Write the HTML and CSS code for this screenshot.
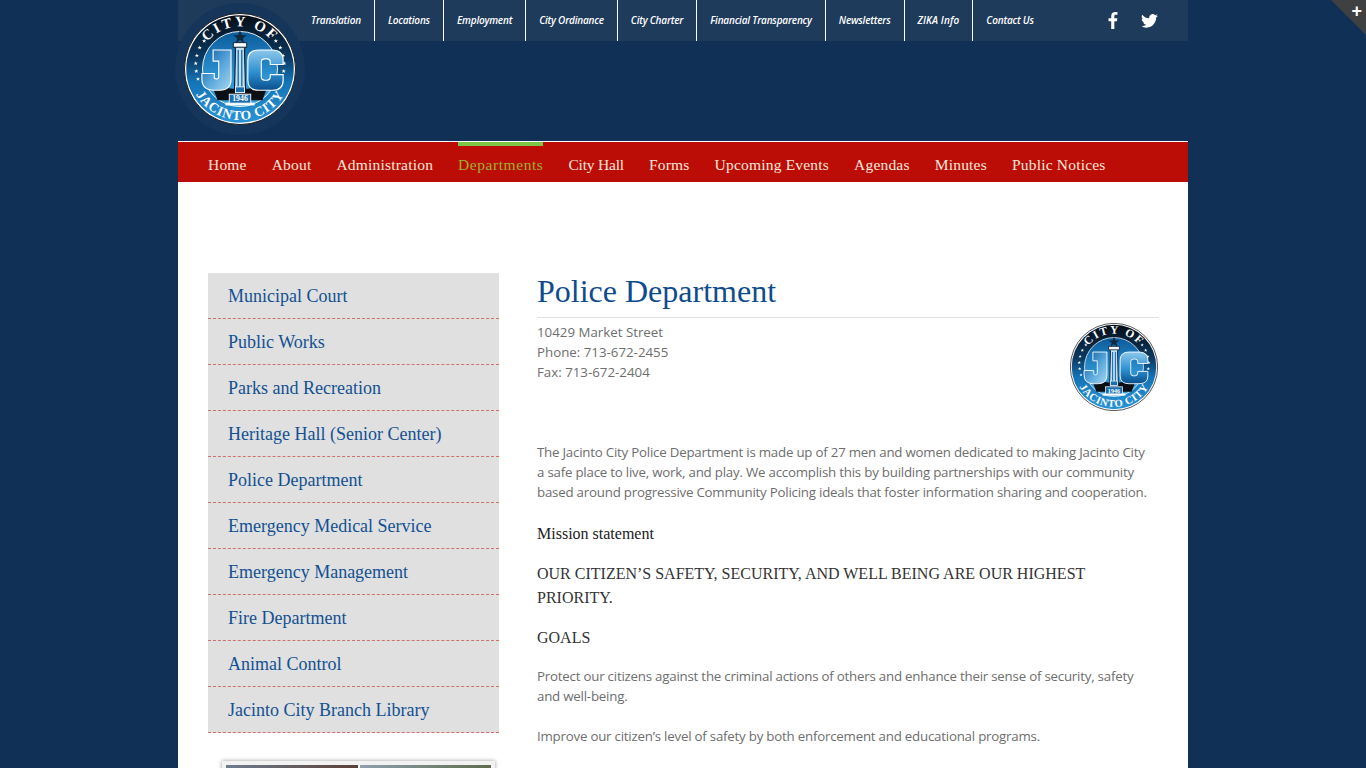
FILE: index.html
```html
<!DOCTYPE html>
<html lang="en">
<head>
<meta charset="utf-8">
<title>Police Department</title>
<link rel="stylesheet" href="styles.css">
</head>
<body>
<svg class="defs" width="0" height="0" aria-hidden="true">
  <defs>
    <linearGradient id="ringGrad" x1="0" y1="0" x2="0" y2="1">
      <stop offset="0" stop-color="#050d16"/>
      <stop offset=".4" stop-color="#0c3a63"/>
      <stop offset=".62" stop-color="#1374b6"/>
      <stop offset="1" stop-color="#2a94d6"/>
    </linearGradient>
    <linearGradient id="discGrad" x1="0" y1="0" x2="0" y2="1">
      <stop offset="0" stop-color="#0a5c9c"/>
      <stop offset=".6" stop-color="#2f93d2"/>
      <stop offset="1" stop-color="#3ba2dc"/>
    </linearGradient>
    <linearGradient id="letterJ" x1="0" y1="0" x2="1" y2="1">
      <stop offset="0" stop-color="#0a5596"/>
      <stop offset=".55" stop-color="#5aa8dc"/>
      <stop offset="1" stop-color="#a8d6f0"/>
    </linearGradient>
    <linearGradient id="letterC" x1="0" y1="0" x2="0" y2="1">
      <stop offset="0" stop-color="#8cc8ec"/>
      <stop offset=".55" stop-color="#2f8fd0"/>
      <stop offset="1" stop-color="#0a4f8c"/>
    </linearGradient>
    <path id="arcTop" d="M 12 50 A 38 38 0 0 1 88 50"/>
    <path id="arcBottom" d="M 4.500 50 A 45.500 45.500 0 0 0 95.500 50"/>
    <path id="star" d="M0-1.900.5-.6H1.900L.8.200 1.200 1.600 0 .7-1.200 1.600-.8.200-1.900-.6H-.5z" fill="#fff"/>
    <symbol id="seal" viewBox="0 0 100 100">
      <circle cx="50" cy="50" r="49.600" fill="#fff" stroke="#111" stroke-width=".8"/>
      <circle cx="50" cy="50" r="48" fill="url(#ringGrad)"/>
      <circle cx="50" cy="50" r="33.500" fill="url(#discGrad)" stroke="#fff" stroke-width=".8"/>
      <path d="M24 62q26 12 52 0l-6 16H30z" fill="#0a0f16"/>
      <text class="seal-top"><textPath href="#arcTop" startOffset="50%" text-anchor="middle">CITY OF</textPath></text>
      <text class="seal-bottom"><textPath href="#arcBottom" startOffset="50%" text-anchor="middle">JACINTO CITY</textPath></text>
      <use href="#star" x="11" y="52"/><use href="#star" x="10.500" y="45"/><use href="#star" x="11.500" y="38"/>
      <use href="#star" x="14" y="31"/><use href="#star" x="18" y="25"/><use href="#star" x="12.500" y="59"/>
      <use href="#star" x="89" y="52"/><use href="#star" x="89.500" y="45"/><use href="#star" x="88.500" y="38"/>
      <use href="#star" x="86" y="31"/><use href="#star" x="82" y="25"/><use href="#star" x="87.500" y="59"/>
      <path d="M26 33h16v26q0 10-10 10h-5q-11 0-11-10v-5h11v3q0 2 2 2t2-2V43h-5z" fill="url(#letterJ)" stroke="#fff" stroke-width="1"/>
      <path d="M88.500 46H77v-2q0-3-3-3h-2q-3 0-3 3v13q0 3 3 3h2q3 0 3-3v-2h11.500v5q0 9-10 9H67q-10 0-10-9V42q0-9 10-9h11.500q10 0 10 9z" fill="url(#letterC)" stroke="#fff" stroke-width="1"/>
      <path d="M45.500 30h9l-.5 3 1 39h-10l1-39z" fill="#bfe0f5" stroke="#0b1a2a" stroke-width="1"/>
      <rect x="44" y="26.500" width="12" height="4" fill="#fff" stroke="#0b1a2a" stroke-width=".8"/>
      <path d="M47.800 33h1.200v38h-1.200zM51 33h1.200v38H51z" fill="#1e6aa8"/>
      <rect x="46" y="66" width="8" height="5" fill="#1b6fae" stroke="#fff" stroke-width=".7"/>
      <path d="M50 15.500l1.700 4.300h4.300l-3.500 2.700 1.300 4.200-3.800-2.600-3.800 2.600 1.300-4.200-3.500-2.700h4.300z" fill="#12263c"/>
      <rect x="37" y="80" width="26" height="2.500" fill="#fff"/>
      <rect x="40.400" y="72.500" width="19.200" height="8" fill="#1b6fae" stroke="#fff" stroke-width=".8"/>
      <text class="seal-year" x="50" y="79" text-anchor="middle">1946</text>
    </symbol>
  </defs>
</svg>

<div class="corner" aria-hidden="true"><span class="corner-plus">+</span></div>

<div class="wrapper">
  <header class="header">
    <div class="seal-halo"><svg class="seal-large" role="img" aria-label="City of Jacinto City seal"><use href="#seal"/></svg></div>
    <div class="topbar">
      <nav class="topnav">
        <a class="tn">Translation</a>
        <a class="tn">Locations</a>
        <a class="tn">Employment</a>
        <a class="tn">City Ordinance</a>
        <a class="tn">City Charter</a>
        <a class="tn">Financial Transparency</a>
        <a class="tn">Newsletters</a>
        <a class="tn tn-zika">ZIKA Info</a>
        <a class="tn tn-last">Contact Us</a>
      </nav>
      <div class="social">
        <svg class="fb" viewBox="0 0 10 19" aria-label="Facebook"><path fill="#fff" d="M6.500 19V10.300h2.900l.4-3.400H6.500V4.700c0-1 .3-1.600 1.700-1.600H10V.1C9.700.1 8.600 0 7.400 0 4.800 0 3 1.600 3 4.400v2.500H0v3.400h3V19z"/></svg>
        <svg class="tw" viewBox="0 0 24 20" aria-label="Twitter"><path fill="#fff" d="M24 2.400a9.800 9.800 0 0 1-2.800.8A4.900 4.900 0 0 0 23.300.5a9.800 9.800 0 0 1-3.100 1.200 4.900 4.900 0 0 0-8.400 4.500A14 14 0 0 1 1.700.9a4.900 4.900 0 0 0 1.500 6.600 4.900 4.900 0 0 1-2.200-.6v.1a4.900 4.900 0 0 0 3.900 4.800 4.900 4.900 0 0 1-2.200.1 4.900 4.900 0 0 0 4.600 3.400A9.900 9.900 0 0 1 0 17.300 14 14 0 0 0 7.500 19.500c9.100 0 14-7.500 14-14v-.6A10 10 0 0 0 24 2.400z"/></svg>
      </div>
    </div>
  </header>

  <nav class="mainnav">
    <a class="mn">Home</a>
    <a class="mn">About</a>
    <a class="mn">Administration</a>
    <a class="mn mn-active">Departments</a>
    <a class="mn mn-hall">City Hall</a>
    <a class="mn">Forms</a>
    <a class="mn">Upcoming Events</a>
    <a class="mn">Agendas</a>
    <a class="mn">Minutes</a>
    <a class="mn">Public Notices</a>
  </nav>

  <div class="content">
    <aside class="sidebar">
      <ul class="sidemenu">
        <li><a>Municipal Court</a></li>
        <li><a>Public Works</a></li>
        <li><a>Parks and Recreation</a></li>
        <li><a>Heritage Hall (Senior Center)</a></li>
        <li><a>Police Department</a></li>
        <li><a>Emergency Medical Service</a></li>
        <li><a>Emergency Management</a></li>
        <li><a>Fire Department</a></li>
        <li><a>Animal Control</a></li>
        <li><a>Jacinto City Branch Library</a></li>
      </ul>
      <div class="photo">
        <div class="photo-a"></div>
        <div class="photo-b"></div>
      </div>
    </aside>
    <main class="main">
      <h1 class="title">Police Department</h1>
      <div class="contact">
        <p class="address">10429 Market Street<br>Phone: 713-672-2455<br>Fax: 713-672-2404</p>
        <svg class="seal-small" role="img" aria-label="City of Jacinto City seal"><use href="#seal"/></svg>
      </div>
      <p class="body-text">The Jacinto City Police Department is made up of 27 men and women dedicated to making Jacinto City a safe place to live, work, and play. We accomplish this by building partnerships with our community based around progressive Community Policing ideals that foster information sharing and cooperation.</p>
      <p class="serif-sm">Mission statement</p>
      <p class="serif-lg">OUR CITIZEN’S SAFETY, SECURITY, AND WELL BEING ARE OUR HIGHEST PRIORITY.</p>
      <p class="serif-goals">GOALS</p>
      <p class="body-text goal">Protect our citizens against the criminal actions of others and enhance their sense of security, safety and well-being.</p>
      <p class="body-text goal">Improve our citizen’s level of safety by both enforcement and educational programs.</p>
    </main>
  </div>
</div>
</body>
</html>
```
FILE: styles.css
```css
html, body { margin: 0; padding: 0; }
body {
  background: #103155;
  font-family: "Open Sans", "Noto Sans", sans-serif;
  height: 768px;
  overflow: hidden;
  position: relative;
}
.defs { position: absolute; }
a { color: inherit; text-decoration: none; }
p { margin: 0; }

.corner {
  position: absolute;
  top: 0;
  right: 0;
  width: 35px;
  height: 35px;
  background: #3f4042;
  clip-path: polygon(0 0, 100% 0, 100% 100%);
}
.corner-plus {
  position: absolute;
  right: 4px;
  top: 3px;
  color: #fff;
  font: 700 18px/17px "Liberation Sans", sans-serif;
}

.wrapper { width: 1010px; margin-left: 178px; }

.header { height: 141px; position: relative; }
.seal-halo {
  position: absolute;
  left: -3px;
  top: 3px;
  width: 130px;
  height: 132px;
  border-radius: 50%;
  background: #15365a;
  display: flex;
  align-items: center;
  justify-content: center;
}
.seal-large { width: 112px; height: 112px; }
.topbar {
  height: 41px;
  background: #1f3b5c;
  display: flex;
  justify-content: space-between;
  padding-left: 120px;
}
.topnav { display: flex; }
.tn {
  color: #fff;
  font: italic 600 10px/40px "Open Sans", sans-serif;
  letter-spacing: -.2px;
  height: 41px;
  padding: 0 13px;
  border-right: 1px solid #fff;
  white-space: nowrap;
}
.tn-zika { letter-spacing: .12px; }
.tn-last { border-right: 0; }
.social { display: flex; align-items: center; gap: 23px; padding-right: 30px; }
.fb { width: 10px; height: 17px; }
.tw { width: 17px; height: 14px; }

.mainnav {
  height: 40px;
  border-top: 1px solid #fff;
  background: #bb0d05;
  display: flex;
  padding-left: 30px;
  gap: 25px;
}
.mn {
  color: #f7e8dc;
  font: 15.500px/46px "Liberation Serif", serif;
  letter-spacing: .2px;
  position: relative;
  white-space: nowrap;
}
.mn-hall { letter-spacing: -.2px; }
.mn-active { color: #9ab22c; letter-spacing: .56px; }
.mn-active::before {
  content: "";
  position: absolute;
  left: 0;
  right: 0;
  top: 0;
  height: 4px;
  background: #7dc544;
}

.content {
  background: #fff;
  height: 586px;
  display: flex;
  padding: 91px 29px 0 30px;
  gap: 38px;
  box-sizing: border-box;
}
.sidebar { width: 291px; flex: none; }
.sidemenu { list-style: none; margin: 0; padding: 0; }
.sidemenu li {
  height: 46px;
  box-sizing: border-box;
  background: #e0e0e0;
  border-bottom: 1px dashed #d0706a;
  padding-left: 20px;
  color: #125192;
  font: 18px/47px "Liberation Serif", serif;
}
.photo {
  margin: 28px 4px 0 14px;
  height: 60px;
  padding: 4px;
  display: flex;
  gap: 2px;
  background: #f2f2f2;
  box-shadow: 0 0 4px #9a9a9a;
}
.photo-a { flex: 1; background: linear-gradient(90deg, #6d7d8e, #5b4038); }
.photo-b { flex: 1; background: linear-gradient(90deg, #8ea0ad, #5f6b4c); }

.main { width: 622px; flex: none; }
.title {
  margin: 0;
  color: #0f4c8e;
  font: 400 32px/36px "Liberation Serif", serif;
  height: 44px;
  border-bottom: 1px solid #e1e1e1;
}
.contact { display: flex; justify-content: space-between; height: 124px; padding-top: 4px; box-sizing: border-box; }
.address, .body-text {
  color: #6e6e6e;
  font-size: 13.300px;
  line-height: 20px;
}
.address { letter-spacing: 0; }
.body-text { letter-spacing: -.22px; padding-right: 10px; }
.seal-small { width: 88px; height: 88px; margin-top: 1px; margin-right: 1px; }
.serif-sm { margin-top: 22px; color: #222; font: 16px/20px "Liberation Serif", serif; }
.serif-lg { margin-top: 18px; color: #333; font: 16px/24px "Liberation Serif", serif; }
.serif-goals { margin-top: 16px; color: #333; font: 16px/24px "Liberation Serif", serif; }
.goal { margin-bottom: 20px; }
.serif-goals + .goal { margin-top: 16px; }
.seal-top { font: 700 13px "Liberation Serif", serif; fill: #fff; letter-spacing: 2px; }
.seal-bottom { font: 700 12px "Liberation Serif", serif; fill: #fff; letter-spacing: .7px; }
.seal-year { font: 700 7px "Liberation Serif", serif; fill: #fff; }
```
